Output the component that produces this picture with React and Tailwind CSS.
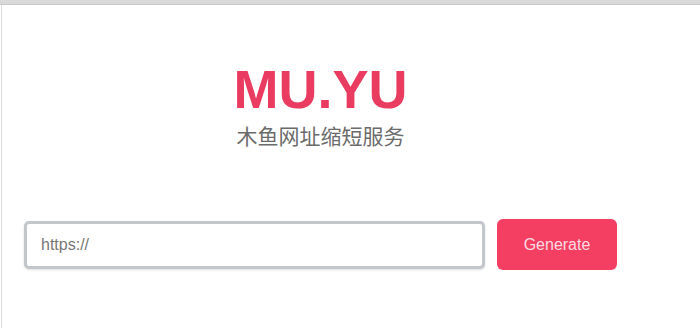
export default function App() {
  return (
    <div
      className="min-h-[328px] bg-white flex flex-col"
      style={{ fontFamily: '"Liberation Sans", Arial, "Noto Sans CJK SC", sans-serif' }}
    >
      <div className="h-[5px] bg-[#d9d9d9] border-b border-[#c8c8c8]" />
      <div className="flex-1 border-l border-[#dcdcdc] ml-[1px]">
        <div className="w-[593px] ml-[22px] flex flex-col items-center">
          <h1 className="mt-[57px] text-[54px] leading-none font-bold text-[#e93c60]">MU.YU</h1>
          <p className="mt-[10px] text-[21px] leading-none text-[#6b6b6b]">木鱼网址缩短服务</p>
          <div className="mt-[72px] w-full flex items-center gap-[12px]">
            <input
              type="text"
              placeholder="https://"
              className="flex-1 h-[48px] px-[14px] border-[3px] border-[#c3c7cb] rounded-[5px] text-[16px] text-[#555] placeholder:text-[#777] outline-none bg-white shadow-sm"
            />
            <button className="w-[120px] h-[51px] rounded-[6px] bg-[#f43f62] text-[#fbdbe3] text-[16px]">
              Generate
            </button>
          </div>
        </div>
      </div>
    </div>
  );
}
